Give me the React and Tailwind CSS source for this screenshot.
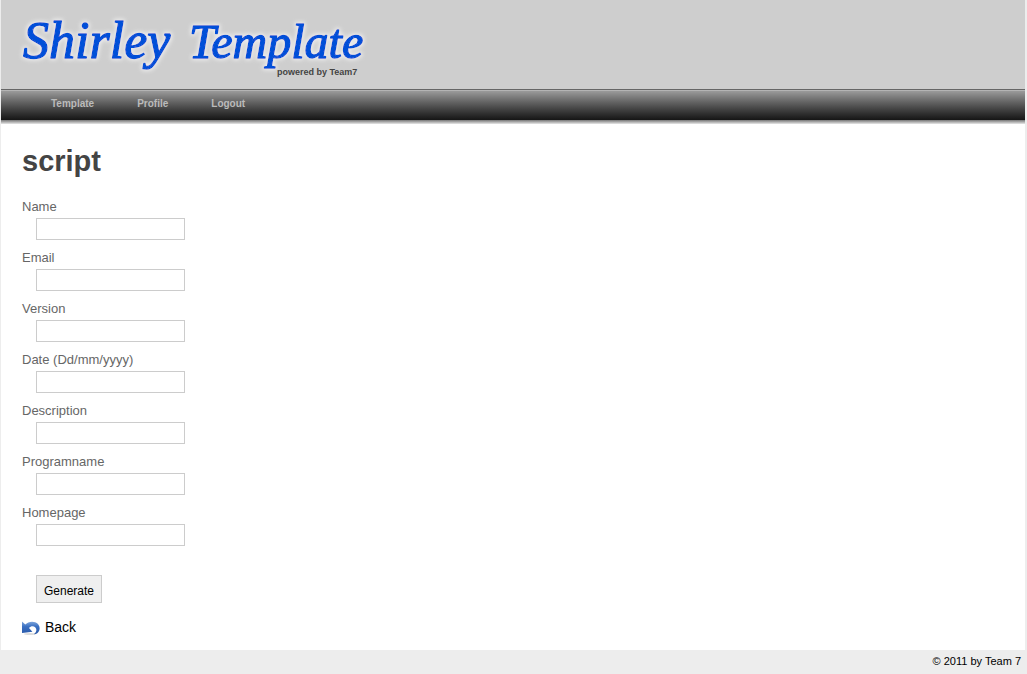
const fields = [
  { id: 'name', label: 'Name' },
  { id: 'email', label: 'Email' },
  { id: 'version', label: 'Version' },
  { id: 'date', label: 'Date (Dd/mm/yyyy)' },
  { id: 'description', label: 'Description' },
  { id: 'programname', label: 'Programname' },
  { id: 'homepage', label: 'Homepage' },
];

const links = ['Template', 'Profile', 'Logout'];

function Logo() {
  return (
    <svg className="block h-[89px] w-[400px]" viewBox="0 0 400 89" role="img" aria-label="Shirley Template powered by Team7">
      <defs>
        <filter id="glow" x="-10%" y="-30%" width="120%" height="160%">
          <feMorphology in="SourceAlpha" operator="dilate" radius="1" result="wide" />
          <feGaussianBlur in="wide" stdDeviation="2" result="soft" />
          <feFlood floodColor="#f0f0f0" />
          <feComposite in2="soft" operator="in" result="halo" />
          <feMerge>
            <feMergeNode in="halo" />
            <feMergeNode in="SourceGraphic" />
          </feMerge>
        </filter>
      </defs>
      <g filter="url(#glow)" fill="#0050d8" stroke="#0050d8" strokeWidth="1.4" strokeLinejoin="round">
        <text x="22" y="58" className="font-['Liberation_Serif',serif] text-[52px] italic">Shirley</text>
        <text x="188" y="58" className="font-['Liberation_Serif',serif] text-[48px] italic">Template</text>
      </g>
      <text x="276" y="75" fill="#444444" className="text-[9px] font-bold">powered by Team7</text>
    </svg>
  );
}

function BackIcon() {
  return (
    <svg className="h-4 w-[18px]" viewBox="0 0 18 16" aria-hidden="true">
      <defs>
        <linearGradient id="arrow" x1="0" y1="0" x2="0" y2="1">
          <stop offset="0" stopColor="#7fa6dc" />
          <stop offset="0.4" stopColor="#3a70c2" />
          <stop offset="1" stopColor="#2857a8" />
        </linearGradient>
      </defs>
      <ellipse cx="8" cy="14" rx="6" ry="1" fill="#dddddd" />
      <path d="M0 1.5 L3.3 4.6 C5.5 2 10 .8 13.3 2.3 C17.8 4.2 19 9.2 16 12.5 C15 13.7 13.5 14.3 11.8 14.2 C14.4 12.4 15.2 9.6 13.4 7.6 C11.6 5.8 8.8 6 7 8 L10.5 11.8 L0 13 Z" fill="url(#arrow)" />
      <path d="M8 8.2 C9.5 6.7 11.8 6.6 13 8.2 C14.2 10 13.4 12.2 11.4 13.2 L10.6 11.4 Z" fill="#ffffff" />
    </svg>
  );
}

export default function App() {
  return (
    <div className="min-h-screen bg-[#ededed] pr-0.5 pl-px font-['Liberation_Sans',Arial,sans-serif] text-black">
      <header className="bg-[#cecece]">
        <Logo />
        <nav className="h-[31px] border-t border-[#666666] bg-linear-to-b from-[#a0a0a0] to-[#161616]">
          <ul className="flex gap-[43px] border-t border-[#b4b4b4] pl-[50px] text-[10px] leading-[26px] font-bold text-[#bbbbbb]">
            {links.map((link) => (
              <li key={link}><a href="#">{link}</a></li>
            ))}
          </ul>
        </nav>
        <div className="h-1 bg-linear-to-b from-[#777777] to-[#e8e8e8]" />
      </header>

      <main className="bg-white px-[21px] pt-5 pb-[14px]">
        <h1 className="text-[29px] leading-[34px] font-bold text-[#444444]">script</h1>
        <form className="mt-5" onSubmit={(event) => event.preventDefault()}>
          {fields.map((field) => (
            <div key={field.id} className="mb-[9px]">
              <label htmlFor={field.id} className="block pb-0.5 text-[13px] leading-[18px] text-[#666666]">{field.label}</label>
              <input id={field.id} name={field.id} type="text" className="ml-[14px] block h-[22px] w-[149px] border border-[#cccccc] bg-white px-1 text-xs" />
            </div>
          ))}
          <button type="submit" className="mt-[29px] ml-[14px] block h-7 border border-[#cccccc] bg-[#efefef] px-[7px] pt-1 text-xs">Generate</button>
        </form>
        <a href="#" className="mt-4 flex w-fit items-center gap-[5px] text-sm leading-[17px]">
          <BackIcon />
          Back
        </a>
      </main>

      <footer className="px-1 pt-1 text-right text-[11px] leading-[14px]">© 2011 by Team 7</footer>
    </div>
  );
}
